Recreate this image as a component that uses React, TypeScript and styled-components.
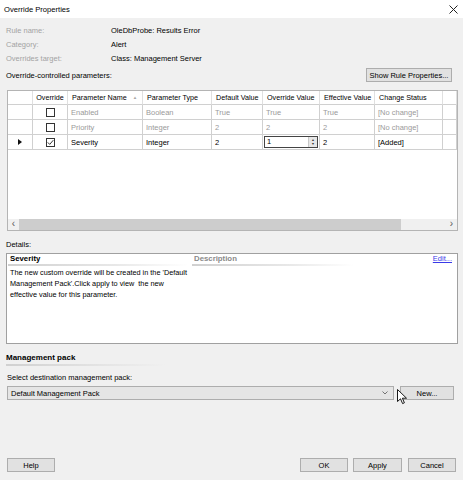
import React from "react";
import styled, { createGlobalStyle } from "styled-components";

type Param = {
  name: string;
  type: string;
  def: string;
  override: string;
  effective: string;
  status: string;
  checked: boolean;
  active: boolean;
};

const params: Param[] = [
  { name: "Enabled", type: "Boolean", def: "True", override: "True", effective: "True", status: "[No change]", checked: false, active: false },
  { name: "Priority", type: "Integer", def: "2", override: "2", effective: "2", status: "[No change]", checked: false, active: false },
  { name: "Severity", type: "Integer", def: "2", override: "1", effective: "2", status: "[Added]", checked: true, active: true },
];

const columns = "25px 35px 75px 69px 51px 57px 55px 68px 1fr";

const GlobalStyle = createGlobalStyle`
  html, body {
    margin: 0;
    padding: 0;
    background: #f0f0f0;
    overflow: hidden;
  }
  body {
    font-family: "Liberation Sans", Arial, sans-serif;
    font-size: 7.5px;
    color: #000;
  }
`;

const CloseIcon = () => (
  <svg width="9" height="9" viewBox="0 0 9 9">
    <path d="M0.5 0.5 L8.5 8.5 M8.5 0.5 L0.5 8.5" stroke="#222" strokeWidth="1" />
  </svg>
);

const CheckBox = ({ checked }: { checked: boolean }) => (
  <Box>
    {checked && (
      <svg width="7" height="7" viewBox="0 0 7 7">
        <path d="M0.8 3.4 L2.7 5.4 L6.3 1.2" stroke="#333" strokeWidth="1" fill="none" />
      </svg>
    )}
  </Box>
);

const Pointer = () => (
  <svg width="4" height="6" viewBox="0 0 4 6">
    <path d="M0 0 L4 3 L0 6 Z" fill="#111" />
  </svg>
);

const Cursor = () => (
  <svg width="11" height="16" viewBox="0 0 11 16">
    <path
      d="M0.5 0.5 L0.5 12.5 L3.5 9.8 L5.6 14.6 L7.4 13.8 L5.4 9.2 L9.5 9.2 Z"
      fill="#fff"
      stroke="#000"
      strokeWidth="0.9"
      strokeLinejoin="round"
    />
  </svg>
);

export default function App() {
  return (
    <Window>
      <GlobalStyle />
      <TitleBar>
        <span>Override Properties</span>
        <CloseIcon />
      </TitleBar>

      <Info>
        <Label>Rule name:</Label>
        <span>OleDbProbe: Results Error</span>
        <Label>Category:</Label>
        <span>Alert</span>
        <Label>Overrides target:</Label>
        <span>Class: Management Server</span>
      </Info>

      <ParamsBar>
        <span>Override-controlled parameters:</span>
        <Button $width={86}>Show Rule Properties...</Button>
      </ParamsBar>

      <Grid>
        <Table>
          <HeaderRow>
            <HeadCell />
            <HeadCell $center>Override</HeadCell>
            <HeadCell>
              Parameter Name <SortArrow>▲</SortArrow>
            </HeadCell>
            <HeadCell>Parameter Type</HeadCell>
            <HeadCell>Default Value</HeadCell>
            <HeadCell>Override Value</HeadCell>
            <HeadCell>Effective Value</HeadCell>
            <HeadCell>Change Status</HeadCell>
            <HeadCell />
          </HeaderRow>
          {params.map((p) => (
            <DataRow key={p.name} $active={p.active}>
              <Cell>{p.active && <Pointer />}</Cell>
              <Cell $center>
                <CheckBox checked={p.checked} />
              </Cell>
              <Cell>{p.name}</Cell>
              <Cell>{p.type}</Cell>
              <Cell>{p.def}</Cell>
              <Cell $edit={p.active}>
                {p.active ? (
                  <Spin>
                    <SpinText>{p.override}</SpinText>
                    <SpinButtons>
                      <span>▲</span>
                      <span>▼</span>
                    </SpinButtons>
                  </Spin>
                ) : (
                  p.override
                )}
              </Cell>
              <Cell>{p.effective}</Cell>
              <Cell>{p.status}</Cell>
              <Cell />
            </DataRow>
          ))}
        </Table>
        <ScrollBar>
          <ScrollArrow>‹</ScrollArrow>
          <Track>
            <Thumb />
          </Track>
          <ScrollArrow>›</ScrollArrow>
        </ScrollBar>
      </Grid>

      <SectionLabel>Details:</SectionLabel>

      <Details>
        <LeftPanel>
          <PanelHead $width={177}>Severity</PanelHead>
          <PanelText>
            The new custom override will be created in the 'Default
            <br />
            Management Pack'.Click apply to view&nbsp; the new
            <br />
            effective value for this parameter.
          </PanelText>
        </LeftPanel>
        <RightPanel>
          <PanelHead $width={159} $muted>
            Description
          </PanelHead>
          <EditLink>Edit...</EditLink>
        </RightPanel>
      </Details>

      <MpHeading>Management pack</MpHeading>
      <SelectLabel>Select destination management pack:</SelectLabel>
      <ComboRow>
        <Combo>
          <span>Default Management Pack</span>
          <svg width="6" height="4" viewBox="0 0 6 4">
            <path d="M0.5 0.5 L3 3 L5.5 0.5" stroke="#555" strokeWidth="0.8" fill="none" />
          </svg>
        </Combo>
        <Button $width={54}>New...</Button>
        <CursorSpot>
          <Cursor />
        </CursorSpot>
      </ComboRow>

      <Footer>
        <Button $width={48}>Help</Button>
        <FooterRight>
          <Button $width={48}>OK</Button>
          <Button $width={49}>Apply</Button>
          <Button $width={48}>Cancel</Button>
        </FooterRight>
      </Footer>
    </Window>
  );
}

const Window = styled.div`
  width: 463px;
  height: 480px;
  display: flex;
  flex-direction: column;
  background: #f0f0f0;
`;

const TitleBar = styled.div`
  height: 18px;
  flex-shrink: 0;
  background: #fff;
  display: flex;
  align-items: center;
  justify-content: space-between;
  padding: 0 5px 0 4px;
  font-size: 7.6px;
`;

const Info = styled.div`
  display: grid;
  grid-template-columns: 105px 1fr;
  grid-auto-rows: 14px;
  align-items: center;
  padding: 5px 6px 0;
`;

const Label = styled.span`
  color: #a3a3a3;
`;

const ParamsBar = styled.div`
  height: 20px;
  display: flex;
  align-items: center;
  justify-content: space-between;
  padding: 0 11px 0 6px;
`;

const Button = styled.div<{ $width: number }>`
  width: ${(p) => p.$width}px;
  height: 14px;
  box-sizing: border-box;
  border: 1px solid #adadad;
  background: #e1e1e1;
  display: flex;
  align-items: center;
  justify-content: center;
  flex-shrink: 0;
  white-space: nowrap;
`;

const Grid = styled.div`
  margin: 5px 5px 0 7px;
  width: 451px;
  height: 141px;
  box-sizing: border-box;
  border: 1px solid #b4b4b4;
  background: #fff;
  display: flex;
  flex-direction: column;
`;

const Table = styled.div`
  flex: 1;
`;

const HeaderRow = styled.div`
  display: grid;
  grid-template-columns: ${columns};
  height: 14px;
  font-size: 7.2px;
`;

const HeadCell = styled.div<{ $center?: boolean }>`
  border-right: 1px solid #e0e0e0;
  border-bottom: 1px solid #d0d0d0;
  display: flex;
  align-items: center;
  justify-content: ${(p) => (p.$center ? "center" : "flex-start")};
  padding-left: ${(p) => (p.$center ? 0 : 4)}px;
  white-space: nowrap;
  overflow: hidden;
`;

const SortArrow = styled.span`
  color: #a8a8a8;
  font-size: 4.5px;
  margin-left: 6px;
`;

const DataRow = styled.div<{ $active: boolean }>`
  display: grid;
  grid-template-columns: ${columns};
  height: 15px;
  color: ${(p) => (p.$active ? "#000" : "#9a9a9a")};
`;

const Cell = styled.div<{ $center?: boolean; $edit?: boolean }>`
  border-right: 1px solid #d0d0d0;
  border-bottom: 1px solid #d0d0d0;
  display: flex;
  align-items: center;
  justify-content: ${(p) => (p.$center ? "center" : "flex-start")};
  padding-left: ${(p) => (p.$center || p.$edit ? 0 : 3)}px;
  white-space: nowrap;
  overflow: hidden;

  &:first-child {
    justify-content: center;
    padding-left: 0;
  }
`;

const Box = styled.div`
  width: 9px;
  height: 9px;
  box-sizing: border-box;
  border: 1px solid #333;
  background: #fff;
  display: flex;
  align-items: center;
  justify-content: center;
`;

const Spin = styled.div`
  margin-left: 1px;
  width: 54px;
  height: 12px;
  box-sizing: border-box;
  border: 1px solid #444;
  display: flex;
`;

const SpinText = styled.span`
  flex: 1;
  padding-left: 2px;
  line-height: 10px;
`;

const SpinButtons = styled.div`
  width: 8px;
  background: #e6e6e6;
  border-left: 1px solid #c8c8c8;
  display: flex;
  flex-direction: column;
  align-items: center;
  justify-content: center;
  font-size: 3.5px;
  line-height: 4.5px;
  color: #333;
`;

const ScrollBar = styled.div`
  height: 11px;
  display: flex;
  background: #f0f0f0;
`;

const ScrollArrow = styled.div`
  width: 11px;
  display: flex;
  align-items: center;
  justify-content: center;
  font-size: 10px;
  color: #555;
  line-height: 1;
  padding-bottom: 2px;
  box-sizing: border-box;
`;

const Track = styled.div`
  flex: 1;
  display: flex;
`;

const Thumb = styled.div`
  width: 382px;
  background: #cdcdcd;
`;

const SectionLabel = styled.div`
  height: 22px;
  display: flex;
  align-items: flex-end;
  padding: 0 6px 3px;
  box-sizing: border-box;
  line-height: 10px;
`;

const Details = styled.div`
  margin: 0 5px 0 6px;
  height: 91px;
  box-sizing: border-box;
  border: 1px solid #a0a0a0;
  background: #fff;
  display: flex;
`;

const LeftPanel = styled.div`
  width: 178px;
  padding-left: 1px;
`;

const RightPanel = styled.div`
  flex: 1;
  margin-left: 6px;
  position: relative;
`;

const PanelHead = styled.div<{ $width: number; $muted?: boolean }>`
  height: 10px;
  line-height: 10px;
  font-weight: bold;
  font-size: 7.8px;
  padding-left: 2px;
  color: ${(p) => (p.$muted ? "#8a8a8a" : "#000")};
  border-bottom: 2px solid transparent;
  width: ${(p) => p.$width}px;
  border-image: linear-gradient(to right, #d0d0d0, #e8e8e8 60%, rgba(255, 255, 255, 0)) 1;
  border-top: 0;
  border-left: 0;
  border-right: 0;
`;

const PanelText = styled.div`
  padding: 1px 2px 0;
  line-height: 11px;
  white-space: nowrap;
  font-size: 7.3px;
`;

const EditLink = styled.a`
  position: absolute;
  right: 5px;
  top: 0;
  line-height: 10px;
  color: #3a3ae8;
  text-decoration: underline;
`;

const MpHeading = styled.div`
  margin: 9px 0 0 6px;
  width: 159px;
  height: 10px;
  line-height: 10px;
  font-weight: bold;
  font-size: 8px;
  padding-bottom: 1px;
  border-bottom: 2px solid transparent;
  border-image: linear-gradient(to right, #d0d0d0, #e4e4e4 60%, rgba(240, 240, 240, 0)) 1;
`;

const SelectLabel = styled.div`
  margin: 7px 0 0 7px;
  line-height: 10px;
`;

const ComboRow = styled.div`
  margin: 3px 0 0 7px;
  display: flex;
  align-items: center;
  gap: 6px;
  position: relative;
`;

const Combo = styled.div`
  width: 387px;
  height: 14px;
  box-sizing: border-box;
  border: 1px solid #adadad;
  background: #e5e5e5;
  display: flex;
  align-items: center;
  justify-content: space-between;
  padding: 0 5px 0 3px;
`;

const CursorSpot = styled.div`
  position: absolute;
  left: 390px;
  top: 3px;
  display: flex;
`;

const Footer = styled.div`
  margin-top: auto;
  display: flex;
  justify-content: space-between;
  padding: 0 7px 8px;
`;

const FooterRight = styled.div`
  display: flex;
  gap: 5px;

  & > div:last-child {
    margin-left: 1px;
  }
`;
